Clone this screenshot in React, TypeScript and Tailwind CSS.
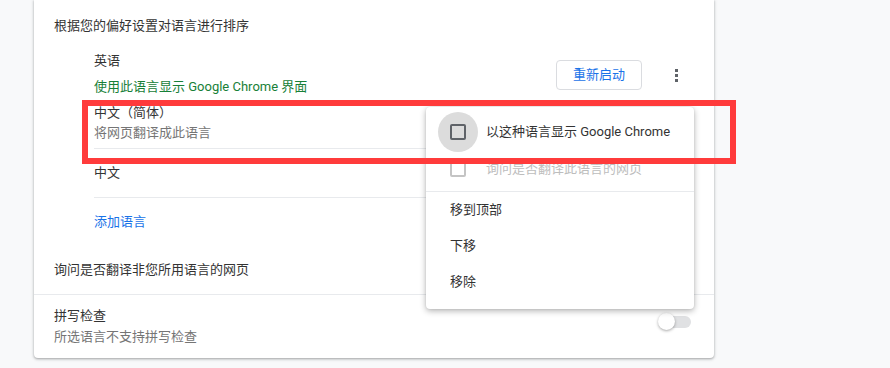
import React from "react";

const font = { fontFamily: 'Roboto, "Noto Sans CJK SC", sans-serif' };

const MenuCheck = ({ label, disabled, focused }: { label: string; disabled?: boolean; focused?: boolean }) => (
  <div className="flex h-[37px] items-center pl-[24px]">
    <div className="relative h-4 w-4">
      {focused && <div className="absolute -inset-[12px] rounded-full bg-[#dcdcdc]" />}
      <div
        className={`relative h-4 w-4 rounded-[2px] border-2 ${
          disabled ? "border-[#c4c4c4]" : "border-[#5f6368]"
        }`}
      />
    </div>
    <span className={`ml-5 text-[13px] ${disabled ? "text-[#bdbdbd]" : "text-[#333]"}`}>{label}</span>
  </div>
);

export default function App() {
  return (
    <div className="relative h-[368px] w-[890px] overflow-hidden bg-[#f8f9fa]" style={font}>
      <div className="ml-[34px] w-[680px] rounded-b bg-white shadow-[0_1px_2px_rgba(60,64,67,0.3),0_1px_3px_1px_rgba(60,64,67,0.15)]">
        <div className="px-5">
          <div className="pt-[17px] text-[13px] leading-[18px] text-[#333]">根据您的偏好设置对语言进行排序</div>

          <div className="ml-10">
            {/* 英语 */}
            <div className="mt-[13px] flex h-[52px] items-center">
              <div className="flex flex-1 flex-col gap-2 text-[13px] leading-[18px]">
                <span className="text-[#333]">英语</span>
                <span className="text-[#188038]">使用此语言显示 Google Chrome 界面</span>
              </div>
              <button className="mt-[2px] h-[30px] rounded border border-[#dadce0] px-4 text-[13px] text-[#1a73e8]">
                重新启动
              </button>
              <div className="ml-4 mt-[2px] flex h-9 w-9 flex-col items-center justify-center gap-[2px]">
                <span className="h-[3px] w-[3px] bg-[#5f6368]" />
                <span className="h-[3px] w-[3px] bg-[#5f6368]" />
                <span className="h-[3px] w-[3px] bg-[#5f6368]" />
              </div>
            </div>

            {/* 中文（简体） */}
            <div className="flex h-[49px] flex-col gap-[2px] border-b border-[#e8eaed] pt-[4px] text-[13px] leading-[18px]">
              <span className="text-[#333]">中文（简体）</span>
              <span className="text-[#757575]">将网页翻译成此语言</span>
            </div>

            {/* 中文 */}
            <div className="flex h-[49px] items-center border-b border-[#e8eaed] text-[13px] text-[#333]">中文</div>

            <div className="flex h-[48px] items-center text-[13px] text-[#1a73e8]">添加语言</div>
          </div>

          <div className="flex h-[48px] items-center text-[13px] text-[#333]">询问是否翻译非您所用语言的网页</div>
        </div>

        <div className="flex h-[64px] items-start justify-between border-t border-[#e8eaed] px-5 pt-[12px]">
          <div className="flex flex-col gap-[3px] text-[13px] leading-[18px]">
            <span className="text-[#333]">拼写检查</span>
            <span className="text-[#757575]">所选语言不支持拼写检查</span>
          </div>
          <div className="relative mr-[3px] mt-[7px] h-[16px] w-[32px]">
            <div className="absolute right-0 top-[2px] h-[12px] w-[29px] rounded-full bg-[#e0e1e3]" />
            <div className="absolute -left-[1px] -top-[1px] h-[17px] w-[17px] rounded-full bg-white shadow-[0_1px_3px_rgba(0,0,0,0.35)]" />
          </div>
        </div>
      </div>

      {/* action menu */}
      <div className="absolute left-[426px] top-[107px] w-[268px] rounded bg-white pb-[9px] pt-[6px] shadow-[0_2px_6px_rgba(0,0,0,0.3),0_0_2px_rgba(0,0,0,0.1)]">
        <MenuCheck label="以这种语言显示 Google Chrome" focused />
        <MenuCheck label="询问是否翻译此语言的网页" disabled />
        <div className="mt-[4px] border-t border-[#e8eaed]" />
        {["移到顶部", "下移", "移除"].map((t) => (
          <div key={t} className="flex h-9 items-center pl-[24px] text-[13px] text-[#333]">
            {t}
          </div>
        ))}
      </div>

      {/* annotation box */}
      <div className="absolute left-[82px] top-[100px] h-[64px] w-[654px] border-[6px] border-[#ff3b3b]" />
    </div>
  );
}
